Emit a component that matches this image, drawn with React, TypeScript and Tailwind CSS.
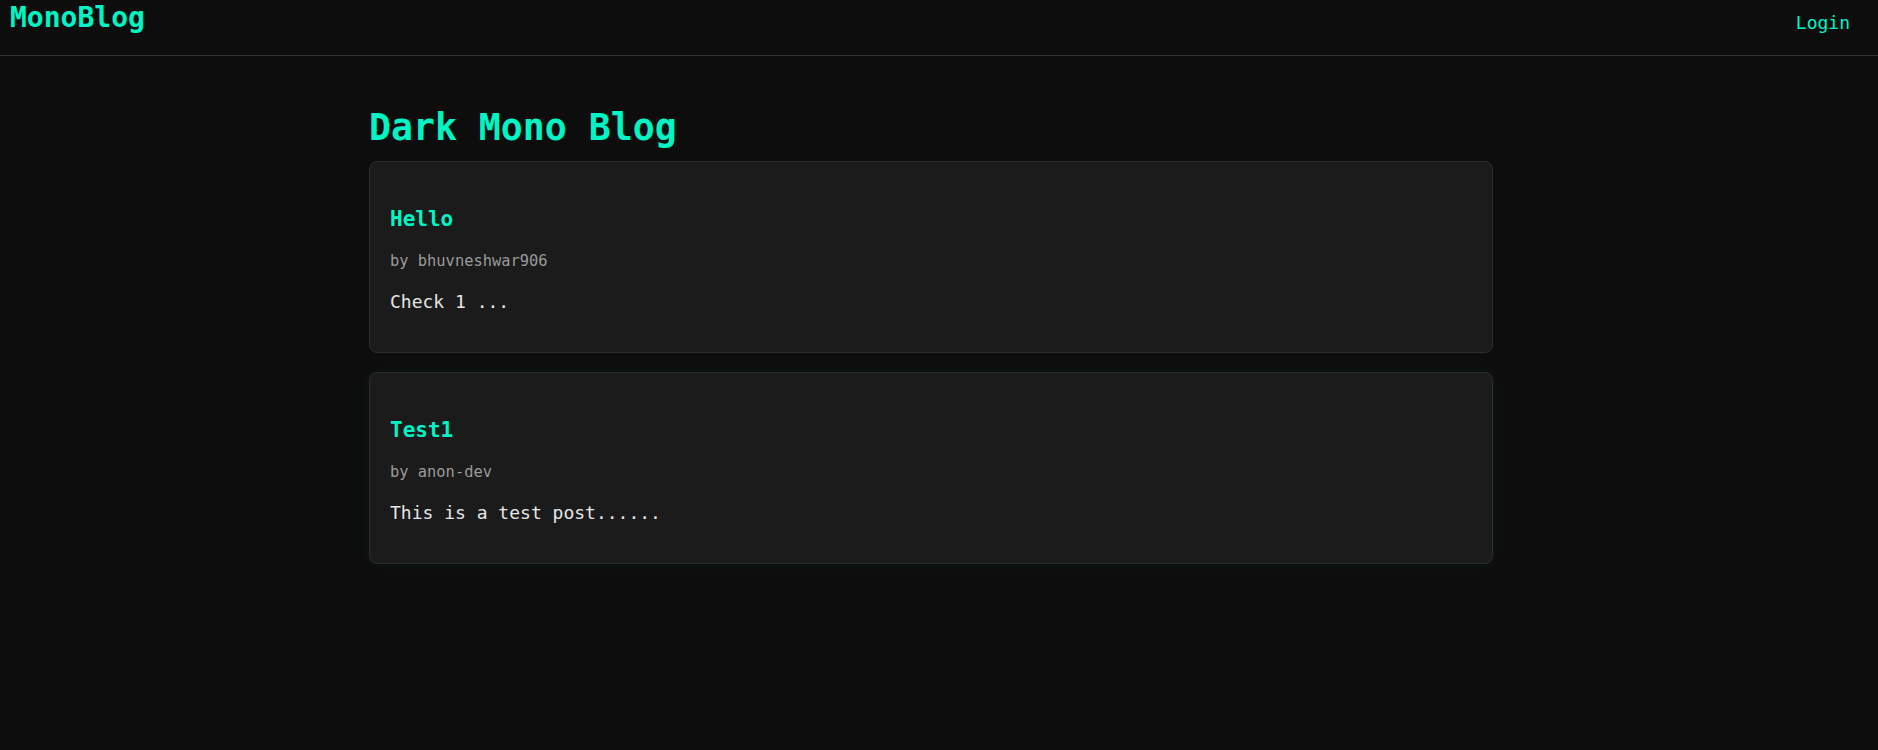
const posts = [
  { id: 1, title: 'Hello', author: 'bhuvneshwar906', excerpt: 'Check 1 ...' },
  { id: 2, title: 'Test1', author: 'anon-dev', excerpt: 'This is a test post......' },
]

const mono = "font-['DejaVu_Sans_Mono','Liberation_Mono',monospace]"

export default function App() {
  return (
    <div className={`min-h-screen bg-[#0d0d0d] ${mono}`}>
      {/* Header */}
      <header className="flex h-[56px] items-start justify-between border-b border-[#333]">
        <a className="pl-[10px] pt-[2px] text-[28px] font-bold leading-[32px] text-[#00f5c4]">MonoBlog</a>
        <a className="mr-[28px] mt-[11px] text-[18px] leading-[24px] text-[#00f5c4]">Login</a>
      </header>

      <main className="mx-auto w-[1140px] pr-[16px]">
        <h1 className="mt-[50px] mb-[11px] text-[36.5px] font-bold leading-[44px] text-[#00f5c4]">Dark Mono Blog</h1>

        <div className="flex flex-col gap-[19px]">
          {posts.map((p, i) => (
            <div
              key={p.id}
              className={`rounded-[8px] border border-[#2c2c2c] bg-[#1b1b1b] px-[20px] pt-[43px] pb-[38px] ${
                i === 1 ? 'shadow-[0_0_12px_rgba(0,245,196,0.06)]' : ''
              }`}
            >
              <h2 className="text-[21px] font-bold leading-[28px] text-[#00f5c4]">{p.title}</h2>
              <p className="mt-[18px] text-[15.4px] leading-[20px] text-[#9a9a9a]">by {p.author}</p>
              <p className="mt-[19px] text-[18px] leading-[24px] text-[#e6e6e6]">{p.excerpt}</p>
            </div>
          ))}
        </div>
      </main>
    </div>
  )
}
